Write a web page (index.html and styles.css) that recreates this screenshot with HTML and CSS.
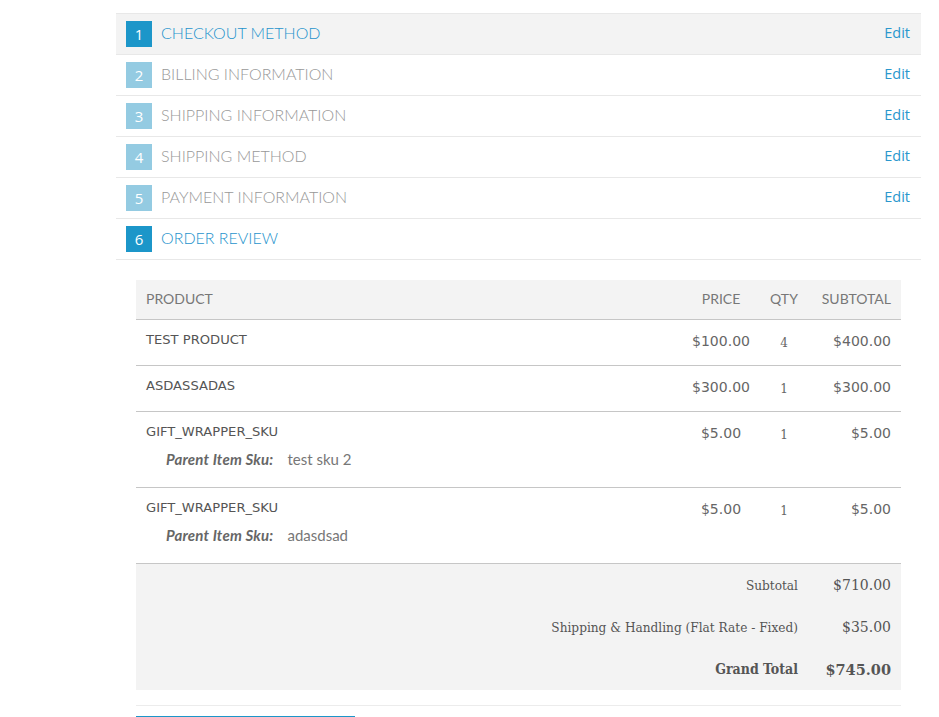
FILE: index.html
```html
<!DOCTYPE html>
<html>
<head>
<meta charset="utf-8">
<title>Checkout</title>
<link rel="stylesheet" href="styles.css">
</head>
<body>
<div class="checkout">
  <ol class="steps">
    <li class="step step-active step-open"><span class="num">1</span><span class="title">CHECKOUT METHOD</span><a class="edit" href="#">Edit</a></li>
    <li class="step"><span class="num">2</span><span class="title">BILLING INFORMATION</span><a class="edit" href="#">Edit</a></li>
    <li class="step"><span class="num">3</span><span class="title">SHIPPING INFORMATION</span><a class="edit" href="#">Edit</a></li>
    <li class="step"><span class="num">4</span><span class="title">SHIPPING METHOD</span><a class="edit" href="#">Edit</a></li>
    <li class="step"><span class="num">5</span><span class="title">PAYMENT INFORMATION</span><a class="edit" href="#">Edit</a></li>
    <li class="step step-active"><span class="num">6</span><span class="title">ORDER REVIEW</span></li>
  </ol>

  <div class="review">
    <table class="items">
      <colgroup>
        <col class="c-name"><col class="c-price"><col class="c-qty"><col class="c-sub">
      </colgroup>
      <thead>
        <tr><th class="name">PRODUCT</th><th class="price">PRICE</th><th class="qty">QTY</th><th class="sub">SUBTOTAL</th></tr>
      </thead>
      <tbody>
        <tr>
          <td class="name"><div class="pname">TEST PRODUCT</div></td>
          <td class="price">$100.00</td><td class="qty">4</td><td class="sub">$400.00</td>
        </tr>
        <tr>
          <td class="name"><div class="pname">ASDASSADAS</div></td>
          <td class="price">$300.00</td><td class="qty">1</td><td class="sub">$300.00</td>
        </tr>
        <tr>
          <td class="name"><div class="pname">GIFT_WRAPPER_SKU</div>
            <dl class="opt"><dt>Parent Item Sku:</dt><dd>test sku 2</dd></dl></td>
          <td class="price">$5.00</td><td class="qty">1</td><td class="sub">$5.00</td>
        </tr>
        <tr>
          <td class="name"><div class="pname">GIFT_WRAPPER_SKU</div>
            <dl class="opt"><dt>Parent Item Sku:</dt><dd>adasdsad</dd></dl></td>
          <td class="price">$5.00</td><td class="qty">1</td><td class="sub">$5.00</td>
        </tr>
      </tbody>
      <tfoot>
        <tr><td class="tlabel" colspan="3">Subtotal</td><td class="tval">$710.00</td></tr>
        <tr><td class="tlabel" colspan="3">Shipping &amp; Handling (Flat Rate - Fixed)</td><td class="tval">$35.00</td></tr>
        <tr class="grand"><td class="tlabel" colspan="3">Grand Total</td><td class="tval">$745.00</td></tr>
      </tfoot>
    </table>
    <div class="actions">
      <div class="place-btn"></div>
    </div>
  </div>
</div>
</body>
</html>
```

FILE: styles.css
```css
html, body {
  margin: 0;
  padding: 0;
  background: #fff;
}
body {
  font-family: "Lato", "Open Sans", sans-serif;
  color: #666;
}
.checkout {
  width: 805px;
  margin: 13px 0 0 116px;
}
.steps {
  list-style: none;
  margin: 0;
  padding: 0;
  border-top: 1px solid #e8e8e8;
}
.step {
  display: flex;
  align-items: center;
  height: 40px;
  padding: 0 11px 0 10px;
  border-bottom: 1px solid #e8e8e8;
}
.step-open {
  background: #f3f3f3;
}
.num {
  width: 26px;
  height: 26px;
  display: flex;
  align-items: center;
  justify-content: center;
  background: #94cbe2;
  color: #fff;
  font-family: "Open Sans", sans-serif;
  font-size: 15px;
  margin-right: 9px;
}
.step-active .num {
  background: #1c96c9;
}
.title {
  flex: 1;
  font-size: 16px;
  font-weight: 300;
  letter-spacing: 0;
  color: #989898;
  padding-bottom: 3px;
}
.step-active .title {
  color: #1f94cd;
}
.edit {
  font-family: "Open Sans", sans-serif;
  font-size: 14.5px;
  color: #2a97cd;
  text-decoration: none;
  padding-bottom: 3px;
}

.review {
  padding: 20px 20px 0;
}
.items {
  width: 765px;
  border-collapse: collapse;
  table-layout: fixed;
}
.c-price { width: 78px; }
.c-qty { width: 48px; }
.c-sub { width: 93px; }

.items thead th {
  background: #f3f3f3;
  height: 36px;
  padding: 0 10px 3px;
  font-weight: 400;
  font-size: 14px;
  color: #777;
  text-align: left;
  border-bottom: 1px solid #c6c6c6;
}
.items th.price, .items th.qty { text-align: center; }
.items th.sub { text-align: right; }

.items tbody td {
  vertical-align: top;
  padding: 11px 10px 13px;
  line-height: 21px;
  border-bottom: 1px solid #c6c6c6;
}
.items tbody td.name {
  padding: 9px 10px 15px;
}
.pname {
  font-family: "DejaVu Sans", sans-serif;
  font-size: 13.1px;
  color: #555;
}
.items td.price, .items td.sub {
  font-family: "DejaVu Sans", sans-serif;
  font-size: 14px;
  color: #666;
}
.items td.price { text-align: center; }
.items td.sub { text-align: right; }
.items tbody td.qty {
  text-align: center;
  font-family: "DejaVu Serif", serif;
  font-size: 12px;
  color: #666;
  padding: 13px 10px 11px;
}
.opt {
  display: flex;
  margin: 7px 0 2px 20px;
  font-size: 15px;
}
.opt dt {
  font-style: italic;
  font-weight: 700;
  color: #666;
  margin-right: 14px;
  letter-spacing: 0.2px;
}
.opt dd {
  margin: 0;
  color: #777;
}

.items tfoot td {
  background: #f3f3f3;
  height: 42px;
  padding: 0 10px;
  text-align: right;
  color: #555;
}
.tlabel {
  font-family: "DejaVu Serif Condensed", "DejaVu Serif", serif;
  font-stretch: condensed;
  font-size: 13.5px;
}
.tval {
  font-family: "DejaVu Serif", serif;
  font-size: 14px;
}
.grand td {
  font-weight: 700;
}
.grand .tlabel {
  font-size: 14px;
}
.grand .tval {
  font-size: 14.5px;
}

.actions {
  margin-top: 15px;
  border-top: 1px solid #ececec;
  padding-top: 10px;
}
.place-btn {
  width: 219px;
  height: 30px;
  border-top: 2px solid #1c96c9;
}
```
